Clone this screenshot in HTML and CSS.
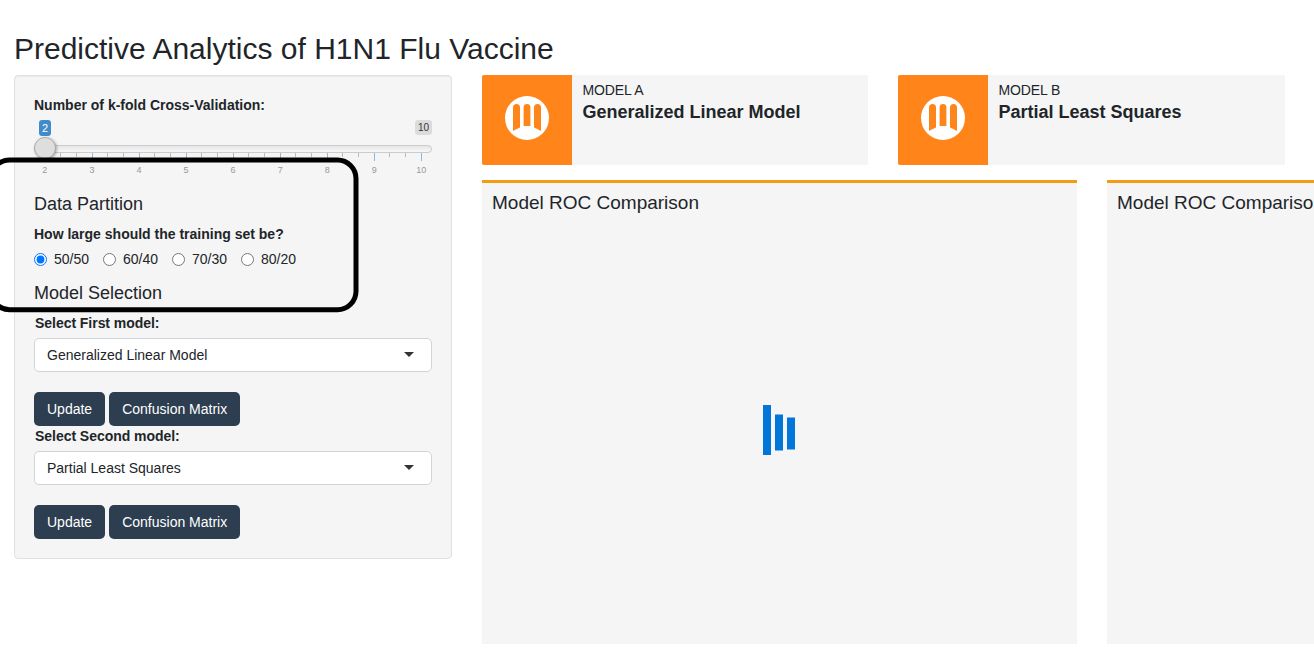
FILE: index.html
```html
<!DOCTYPE html>
<html lang="en">
<head>
<meta charset="utf-8">
<title>Predictive Analytics of H1N1 Flu Vaccine</title>
<link rel="stylesheet" href="styles.css">
</head>
<body>
<h1 class="title">Predictive Analytics of H1N1 Flu Vaccine</h1>
<div class="layout">
  <form class="sidebar">
    <div class="label">Number of k-fold Cross-Validation:</div>
    <div class="slider">
      <div class="slider-values"><span class="value current">2</span><span class="value max">10</span></div>
      <div class="track"><span class="handle"></span></div>
      <svg class="ticks" width="398" height="8" viewBox="0 0 398 8" shape-rendering="crispEdges">
        <path stroke="#bbb" d="M26.5 0v4M42.5 0v4M73.5 0v4M89.5 0v4M120.5 0v4M136.5 0v4M167.5 0v4M183.5 0v4M214.5 0v4M230.5 0v4M261.5 0v4M277.5 0v4M308.5 0v4M324.5 0v4M355.5 0v4M371.5 0v4"/>
        <path stroke="#8fb9dc" d="M11.5 0v8M58.5 0v8M105.5 0v8M152.5 0v8M199.5 0v8M246.5 0v8M293.5 0v8M340.5 0v8M387.5 0v8"/>
      </svg>
      <div class="scale"><span>2</span><span>3</span><span>4</span><span>5</span><span>6</span><span>7</span><span>8</span><span>9</span><span>10</span></div>
    </div>
    <h4 class="section partition">Data Partition</h4>
    <div class="label">How large should the training set be?</div>
    <div class="radios">
      <label class="option"><input class="radio" type="radio" name="split" checked>50/50</label>
      <label class="option"><input class="radio" type="radio" name="split">60/40</label>
      <label class="option"><input class="radio" type="radio" name="split">70/30</label>
      <label class="option"><input class="radio" type="radio" name="split">80/20</label>
    </div>
    <h4 class="section selection">Model Selection</h4>
    <div class="label model-label">Select First model:</div>
    <div class="select">Generalized Linear Model<svg class="caret" width="10" height="5" viewBox="0 0 10 5"><path d="M0 0h10L5 5z" fill="#333"/></svg></div>
    <div class="buttons"><button class="btn" type="button">Update</button><button class="btn" type="button">Confusion Matrix</button></div>
    <div class="label model-label">Select Second model:</div>
    <div class="select">Partial Least Squares<svg class="caret" width="10" height="5" viewBox="0 0 10 5"><path d="M0 0h10L5 5z" fill="#333"/></svg></div>
    <div class="buttons"><button class="btn" type="button">Update</button><button class="btn" type="button">Confusion Matrix</button></div>
  </form>
  <main class="main">
    <div class="infos">
      <div class="info">
        <div class="info-icon"><svg width="44" height="44" viewBox="0 0 44 44"><circle cx="22" cy="22" r="22" fill="#fff"/><path fill="#ff851b" d="M8 35V11.500a3.500 3.500 0 0 1 7 0V31.500Q11 33 8 35zM18.600 30V11.500a3.400 3.400 0 0 1 6.800 0V30zM29 31.500V11.500a3.500 3.500 0 0 1 7 0V35Q33 33 29 31.500z"/></svg></div>
        <div class="info-text"><span class="info-name">MODEL A</span><strong class="info-value">Generalized Linear Model</strong></div>
      </div>
      <div class="info">
        <div class="info-icon"><svg width="44" height="44" viewBox="0 0 44 44"><circle cx="22" cy="22" r="22" fill="#fff"/><path fill="#ff851b" d="M8 35V11.500a3.500 3.500 0 0 1 7 0V31.500Q11 33 8 35zM18.600 30V11.500a3.400 3.400 0 0 1 6.800 0V30zM29 31.500V11.500a3.500 3.500 0 0 1 7 0V35Q33 33 29 31.500z"/></svg></div>
        <div class="info-text"><span class="info-name">MODEL B</span><strong class="info-value">Partial Least Squares</strong></div>
      </div>
    </div>
    <div class="boxes">
      <section class="box">
        <h3 class="box-title">Model ROC Comparison</h3>
        <div class="loader"><svg width="32" height="50" viewBox="0 0 32 50"><path fill="#0275d8" d="M0 0h8v50H0zM12 9.600h8v35.800h-8zM24 12.400h8v32.100h-8z"/></svg></div>
      </section>
      <section class="box"><h3 class="box-title">Model ROC Comparison</h3></section>
    </div>
  </main>
</div>
<svg class="highlight" width="362" height="160" viewBox="0 0 362 160"><rect x="-9" y="5" width="365" height="149.700" rx="18.500" fill="none" stroke="#000" stroke-width="5"/></svg>
</body>
</html>
```
FILE: styles.css
```css
* { box-sizing: border-box; }
body {
  margin: 0;
  height: 655px;
  overflow: hidden;
  background: #fff;
  color: #212529;
  font: 14px/20px "Liberation Sans", Arial, sans-serif;
}
svg { display: block; }
.title { margin: 0; padding: 31px 14px 8px; font-size: 30px; line-height: 36px; font-weight: 400; white-space: nowrap; }
.layout { display: flex; align-items: flex-start; gap: 30px; padding-left: 14px; }
.sidebar {
  flex: 0 0 438px;
  min-width: 0;
  height: 484px;
  padding: 19px;
  background: #f5f5f5;
  border: 1px solid #e1e1e1;
  border-radius: 4px;
  box-shadow: inset 0 1px 1px rgba(0, 0, 0, .05);
}
.label { font-weight: 700; white-space: nowrap; }
.slider { height: 63px; padding-top: 5px; }
.slider-values { display: flex; justify-content: space-between; padding-left: 5px; }
.value { height: 16px; padding: 0 3px; border-radius: 3px; font-size: 11px; line-height: 16px; }
.current { background: #428bca; color: #fff; }
.max { height: 15px; background: #dcdcdc; color: #333; font-size: 10px; line-height: 15px; }
.track {
  height: 8px;
  margin-top: 9px;
  border: 1px solid #ccc;
  border-radius: 8px;
  background: linear-gradient(#dedede -50%, #fff 150%);
}
.handle {
  display: block;
  width: 22px;
  height: 22px;
  margin: -9px 0 0 -1px;
  position: relative;
  border: 1px solid #ababab;
  border-radius: 50%;
  background: #dedede;
  box-shadow: 1px 1px 3px rgba(0, 0, 0, .3);
}
.scale { display: grid; grid-template-columns: repeat(9, 47.070px); margin: 4px 0 0 -12.700px; color: #999; font-size: 9px; line-height: 11px; text-align: center; }
.section { margin: 0; font-size: 18px; line-height: 20px; font-weight: 400; }
.partition { padding: 16px 0 10px; }
.radios { display: flex; gap: 14px; margin-top: 5px; }
.option { display: flex; align-items: center; gap: 7px; width: 55px; white-space: nowrap; }
.radio { width: 13px; height: 13px; margin: 0; flex: none; }
.selection { padding: 14px 0 10px; }
.model-label { padding-left: 1px; letter-spacing: -.04px; }
.select {
  display: flex;
  align-items: center;
  justify-content: space-between;
  height: 34px;
  margin-top: 5px;
  padding: 0 17px 0 12px;
  background: #fff;
  border: 1px solid #ced4da;
  border-radius: 5px;
}
.caret { margin-bottom: 2px; }
.buttons { display: flex; gap: 4px; margin-top: 20px; }
.btn { height: 34px; padding: 0 13px; border: 0; border-radius: 5px; background: #2c3e50; color: #fff; font: inherit; white-space: nowrap; }
.main { flex: 1; min-width: 0; }
.infos { display: grid; grid-template-columns: 386px 387px; gap: 30px; }
.info { display: flex; height: 90px; background: #f5f5f5; border-radius: 2px; }
.info-icon { display: grid; place-items: center; width: 90px; padding-bottom: 4px; background: #ff851b; border-radius: 2px 0 0 2px; }
.info-text { display: flex; flex-direction: column; padding: 5px 10px 5px 10.500px; }
.info-name { letter-spacing: -.1px; }
.info-value { font-size: 18px; line-height: 24px; white-space: nowrap; }
.boxes { display: grid; grid-template-columns: 595px 595px; gap: 30px; margin-top: 15px; }
.box { height: 464px; padding: 10px 10px 0; background: #f5f5f5; border-top: 3px solid #f39c12; }
.box-title { margin: 0; font-size: 19px; line-height: 20px; font-weight: 400; white-space: nowrap; }
.loader { display: flex; justify-content: center; padding: 192px 1px 0 0; }
.highlight { position: absolute; left: 0; top: 155px; pointer-events: none; }
```
